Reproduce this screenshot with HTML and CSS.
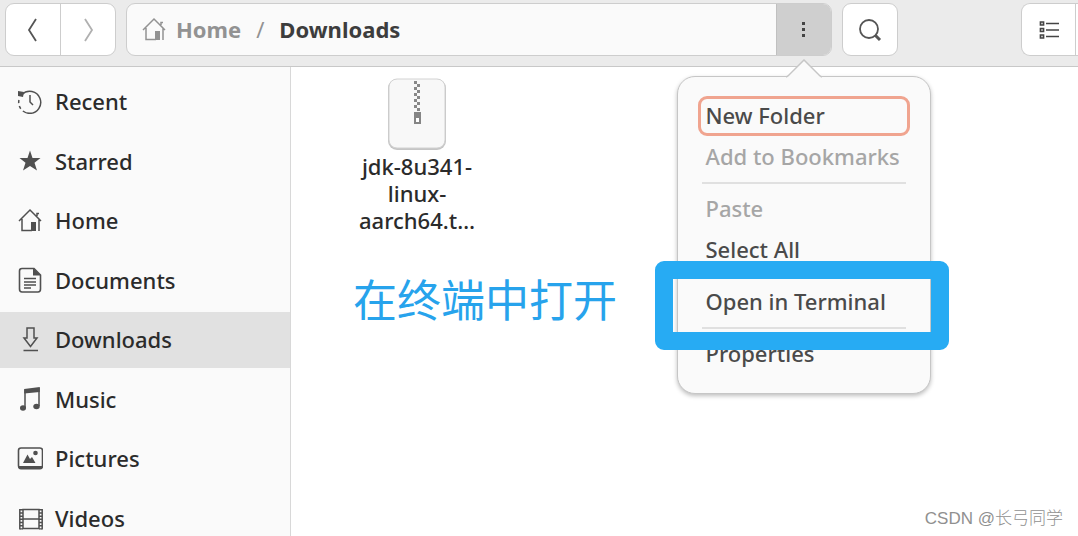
FILE: index.html
```html
<!DOCTYPE html>
<html lang="en">

<head>
    <meta charset="UTF-8">
    <meta name="viewport" content="width=device-width, initial-scale=1.0">
    <title>Downloads</title>
    <link rel="stylesheet" href="styles.css">
</head>

<body>
    <svg class="defs" width="0" height="0" aria-hidden="true">
        <symbol id="home" viewBox="0 0 26 26">
            <path d="M2 14 L13 3 L24 14 M5 12 V23.500 H15 M22 12 V24 M20 9 V6.500 H22" fill="none" stroke="currentColor" stroke-width="1.500" />
            <path d="M14 15 H19 V24 H14 Z" fill="currentColor" />
        </symbol>
    </svg>

    <header class="toolbar">
        <div class="group nav">
            <button aria-label="Back"><svg width="12" height="26" viewBox="0 0 12 26"><path d="M9 2 L2 13 L9 24" fill="none" stroke="#555" stroke-width="1.800" /></svg></button>
            <button class="dim" aria-label="Forward"><svg width="12" height="26" viewBox="0 0 12 26"><path d="M3 2 L10 13 L3 24" fill="none" stroke="#b0b0b0" stroke-width="1.800" /></svg></button>
        </div>

        <div class="group pathbar">
            <nav class="crumbs">
                <a href="#"><svg width="26" height="26"><use href="#home" /></svg>Home</a>
                <span class="slash">/</span>
                <a href="#" class="current">Downloads</a>
            </nav>
            <div class="menu-wrap">
                <button class="kebab" aria-label="Folder menu"><svg width="4" height="16" viewBox="0 0 4 16"><path d="M0 0h3v3H0zM0 6h3v3H0zM0 12h3v3H0z" fill="#444" /></svg></button>

                <div class="popover">
                    <svg class="arrow" width="36" height="20" viewBox="0 0 36 20"><path d="M0 20 V18 L2 17 L18 1 L34 17 L36 18 V20" fill="#fafafa" /><path d="M0 18 L2 17 L18 1 L34 17 L36 18" fill="none" stroke="#c6c6c6" stroke-width="1.500" /></svg>
                    <button class="focused">New Folder</button>
                    <button disabled>Add to Bookmarks</button>
                    <hr>
                    <button disabled>Paste</button>
                    <button>Select All</button>
                    <hr>
                    <button>Open in Terminal</button>
                    <hr>
                    <button>Properties</button>
                    <div class="highlight"></div>
                </div>
            </div>
        </div>

        <div class="group search">
            <button aria-label="Search"><svg width="24" height="24" viewBox="0 0 24 24"><circle cx="11" cy="11" r="9" fill="none" stroke="#555" stroke-width="1.800" /><path d="M17 17 L22 22" stroke="#555" stroke-width="3" /></svg></button>
        </div>

        <div class="group view">
            <button aria-label="List view"><svg width="20" height="20" viewBox="0 0 20 20"><path d="M1.500 2h3v3h-3zM1.500 8.500h3v3h-3zM1.500 15h3v3h-3z" fill="none" stroke="#444" stroke-width="1.700" /><path d="M7 3.500h13M7 10h13M7 16.500h13" stroke="#444" stroke-width="1.700" /></svg></button>
        </div>
    </header>

    <div class="content">
        <aside class="sidebar">
            <ul>
                <li><a href="#"><svg width="26" height="26" viewBox="0 0 26 26"><path d="M5 6.500 A11 11 0 1 1 2.600 10" fill="none" stroke="currentColor" stroke-width="1.500" stroke-dasharray="50 3 3 3 3 3" /><path d="M1 3 L7 4 L6 9 L1 8 Z" fill="currentColor" /><path d="M13 7 V14 L16 17" fill="none" stroke="currentColor" stroke-width="1.500" /></svg>Recent</a></li>
                <li><a href="#"><svg width="26" height="26" viewBox="0 0 26 26"><path d="M13 2.500 L15.500 10 H23.500 L17.500 14.700 L20 22.500 L13 18 L6 22.500 L8.500 14.700 L2.500 10 H10.500 Z" fill="currentColor" /></svg>Starred</a></li>
                <li><a href="#"><svg width="26" height="26"><use href="#home" /></svg>Home</a></li>
                <li><a href="#"><svg width="26" height="26" viewBox="0 0 26 26"><path d="M5 1.500 H17 L23.500 8 V22 Q23.500 25 21 25 H5 Q2.500 25 2.500 22 V4 Q2.500 1.500 5 1.500 Z" fill="none" stroke="currentColor" stroke-width="1.600" /><path d="M16 1 L24 8.500 H16 Z" fill="currentColor" /><path d="M7 11.500H19M7 15H19M7 18H19M7 21H14" stroke="currentColor" stroke-width="1.500" /></svg>Documents</a></li>
                <li class="active"><a href="#"><svg width="26" height="26" viewBox="0 0 26 26"><path d="M10 2 H17 V12 H20 L13.500 20.500 L7 12 H10 Z M6.500 24.500 H21" fill="none" stroke="currentColor" stroke-width="1.500" /></svg>Downloads</a></li>
                <li><a href="#"><svg width="26" height="26" viewBox="0 0 26 26"><path d="M8 22 V3.500 M22 20 V2" stroke="currentColor" stroke-width="1.500" /><path d="M7.200 3 L22.800 1 V6 L7.200 7.500 Z" fill="currentColor" /><ellipse cx="6" cy="22" rx="3" ry="2.800" fill="currentColor" /><ellipse cx="19.500" cy="20.500" rx="3.200" ry="2.800" fill="currentColor" /></svg>Music</a></li>
                <li><a href="#"><svg width="26" height="26" viewBox="0 0 26 26"><rect x="1.500" y="3" width="24" height="20" rx="2.500" fill="none" stroke="currentColor" stroke-width="1.600" /><path d="M1 21 H26 Q26 24.500 23 24.500 H4 Q1 24.500 1 21Z M6 18 L10.500 9.500 L13 14 L15 12 L18.500 18 Z" fill="currentColor" /><circle cx="18.500" cy="8" r="2.300" fill="currentColor" /></svg>Pictures</a></li>
                <li><a href="#"><svg width="26" height="26" viewBox="0 0 26 26"><path d="M6 4.500 H22 V23.500 H6 Z M6 14 H22" fill="none" stroke="currentColor" stroke-width="1.500" /><path d="M2.800 4 V24.500 M25.200 4 V24.500" stroke="currentColor" stroke-width="1.500" /><path d="M4.500 4 V24.500 M23.500 4 V24.500" stroke="currentColor" stroke-width="3" stroke-dasharray="1.500 1.700" /></svg>Videos</a></li>
            </ul>
        </aside>

        <main class="files">
            <figure class="file">
                <svg width="60" height="74" viewBox="0 0 60 74">
                    <rect x="1" y="2" width="58" height="71" rx="9" fill="#c5c5c5" />
                    <rect x="2" y="2" width="56" height="69" rx="8" fill="#f8f8f8" stroke="#d2d2d2" />
                    <path d="M28.500 4 V34" stroke="#888" stroke-width="3" stroke-dasharray="3 3" />
                    <path d="M31.500 7 V35" stroke="#888" stroke-width="3" stroke-dasharray="3 3" />
                    <path d="M27 35h7v12h-7z" fill="#858585" />
                    <path d="M29 41h3v4h-3z" fill="#fff" />
                </svg>
                <figcaption>jdk-8u341-<br>linux-<br>aarch64.t…</figcaption>
            </figure>
            <p class="note" lang="zh-CN">在终端中打开</p>
            <p class="watermark" lang="zh-CN">CSDN @长弓同学</p>
        </main>
    </div>
</body>

</html>
```

FILE: styles.css
```css
/* General Styles */
* {
    box-sizing: border-box;
}

body {
    font-family: 'Noto Sans', 'Noto Sans CJK SC', sans-serif;
    font-size: 22px;
    font-weight: 500;
    color: #2b2b2b;
    background-color: #fff;
    margin: 0;
    height: 100vh;
    display: flex;
    flex-direction: column;
    overflow: hidden;
}

button {
    font: inherit;
    color: inherit;
    background: none;
    border: none;
    padding: 0;
}

a {
    color: inherit;
    text-decoration: none;
}

.defs {
    position: absolute;
}

/* Toolbar */
.toolbar {
    display: flex;
    gap: 10px;
    padding: 3px 0 10px 5px;
    background-color: #ebebeb;
    border-bottom: 1px solid #c8c8c8;
}

.group {
    display: flex;
    height: 53px;
    background-color: #fff;
    border: 1px solid #cdcdcd;
    border-radius: 9px;
}

.group button {
    display: flex;
    align-items: center;
    justify-content: center;
}

.nav button {
    width: 54px;
}

.nav .dim {
    width: 55px;
    border-left: 1px solid #cdcdcd;
}

.pathbar {
    flex: 1;
    background-color: #fafafa;
}

.crumbs {
    flex: 1;
    display: flex;
    align-items: center;
    padding: 0 0 2px 14px;
    font-weight: bold;
    color: #929292;
}

.crumbs a {
    display: flex;
    align-items: center;
    gap: 9px;
}

.crumbs .current {
    color: #3d3d3d;
}

.slash {
    padding: 0 15px;
    font-weight: normal;
}

.menu-wrap {
    position: relative;
    display: flex;
}

.kebab {
    width: 55px;
    background-color: #cfcfcf;
    border-left: 1px solid #c0c0c0;
    border-radius: 0 8px 8px 0;
}

.search button {
    width: 54px;
}

.view {
    margin-left: 113px;
    padding-right: 2px;
    border-right: none;
    border-radius: 9px 0 0 9px;
}

.view button {
    width: 54px;
    border-right: 1px solid #cdcdcd;
}

/* Folder menu */
.popover {
    position: absolute;
    top: 72px;
    left: 50%;
    z-index: 1;
    width: 254px;
    margin-left: -127px;
    padding: 19px 20px;
    display: flex;
    flex-direction: column;
    gap: 1px;
    color: #4a4a4a;
    background-color: #fafafa;
    border: 1px solid #c6c6c6;
    border-radius: 18px;
    box-shadow: 0 2px 4px rgba(0, 0, 0, 0.25);
}

.arrow {
    position: absolute;
    top: -18px;
    left: 108px;
}

.popover button {
    height: 40px;
    padding: 0 5px 3px;
    justify-content: flex-start;
    border: 3px solid transparent;
    border-radius: 9px;
    white-space: nowrap;
}

.popover button:disabled {
    color: #a6a6a6;
}

.popover .focused {
    border-color: #f0a48f;
}

.popover hr {
    width: 204px;
    height: 2px;
    margin: 4px auto;
    border: none;
    background-color: #e0e0e0;
}

.highlight {
    position: absolute;
    top: 184px;
    left: -23px;
    right: -19px;
    height: 89px;
    border: 18px solid #27abf3;
    border-radius: 9px;
}

/* Sidebar */
.content {
    flex: 1;
    display: flex;
    min-height: 0;
}

.sidebar {
    width: 291px;
    background-color: #fafafa;
    border-right: 1px solid #d8d8d8;
    overflow: hidden;
}

.sidebar ul {
    list-style: none;
    margin: 0;
    padding: 7px 0 0;
}

.sidebar li {
    margin-bottom: 4px;
}

.sidebar li:nth-child(even) {
    margin-bottom: 3px;
}

.sidebar a {
    display: flex;
    align-items: center;
    gap: 12px;
    height: 56px;
    padding: 0 0 2px 17px;
}

.sidebar svg {
    color: #505050;
}

.sidebar .active {
    background-color: #e1e1e1;
}

/* Files */
.files {
    flex: 1;
    position: relative;
    padding: 10px 50px;
}

.file {
    width: 152px;
    margin: 0;
    text-align: center;
}

.file svg {
    display: block;
    margin: 0 auto 2px;
}

.file figcaption {
    line-height: 27px;
}

.note {
    position: absolute;
    top: 199px;
    left: 62px;
    margin: 0;
    font-family: 'Noto Sans CJK SC', sans-serif;
    font-size: 44px;
    font-weight: 400;
    line-height: 64px;
    color: #27a3ec;
}

.watermark {
    position: absolute;
    right: 15px;
    bottom: 5px;
    margin: 0;
    font-family: 'Liberation Sans', 'Noto Sans CJK SC', sans-serif;
    font-size: 17px;
    font-weight: 300;
    line-height: 24px;
    color: #909090;
}
```
